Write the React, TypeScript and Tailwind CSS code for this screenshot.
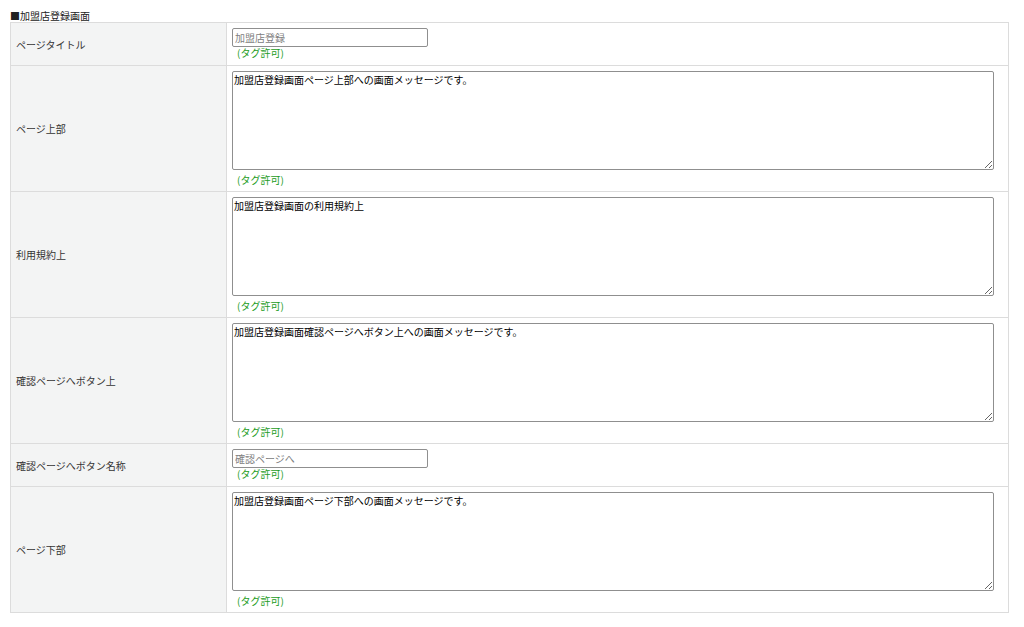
const font = { fontFamily: '"Noto Sans CJK JP", "Noto Sans", sans-serif' };

type Row = {
  label: string;
  kind: "input" | "textarea";
  value: string;
};

const ROWS: Row[] = [
  { label: "ページタイトル", kind: "input", value: "加盟店登録" },
  { label: "ページ上部", kind: "textarea", value: "加盟店登録画面ページ上部への画面メッセージです。" },
  { label: "利用規約上", kind: "textarea", value: "加盟店登録画面の利用規約上" },
  { label: "確認ページへボタン上", kind: "textarea", value: "加盟店登録画面確認ページへボタン上への画面メッセージです。" },
  { label: "確認ページへボタン名称", kind: "input", value: "確認ページへ" },
  { label: "ページ下部", kind: "textarea", value: "加盟店登録画面ページ下部への画面メッセージです。" },
];

const TagNote = () => (
  <div className="pl-[5px] text-[10px] leading-[12px] text-[#1c9c1c]">(タグ許可)</div>
);

const App = () => {
  return (
    <div className="w-[1024px] h-[627px] bg-white text-[#333] pt-[9px]" style={font}>
      <div className="ml-[10px] text-[10px] leading-[13px] text-[#222]">■加盟店登録画面</div>
      <table className="ml-[10px] w-[999px] border-collapse border border-[#dcdcdc]">
        <tbody>
          {ROWS.map((row) => (
            <tr key={row.label} className="border-b border-[#dcdcdc]">
              <td className="w-[216px] bg-[#f3f4f4] border-r border-[#dcdcdc] pl-[5px] text-[10px] align-middle">
                {row.label}
              </td>
              <td className="pl-[5px] align-top">
                {row.kind === "input" ? (
                  <div className="pt-[5px] pb-[6px]">
                    <input
                      type="text"
                      placeholder={row.value}
                      className="block w-[196px] h-[19px] px-[2px] border border-[#8f8f8f] rounded-[2px] text-[10px] placeholder:text-[#808080] outline-none"
                      style={font}
                    />
                    <TagNote />
                  </div>
                ) : (
                  <div className="pt-[5px] pb-[5px]">
                    <textarea
                      defaultValue={row.value}
                      className="block w-[762px] h-[99px] px-[1px] py-[1px] mb-[4px] border border-[#8f8f8f] rounded-[2px] text-[10px] leading-[14px] text-black outline-none"
                      style={font}
                    />
                    <TagNote />
                  </div>
                )}
              </td>
            </tr>
          ))}
        </tbody>
      </table>
    </div>
  );
};

export default App;
